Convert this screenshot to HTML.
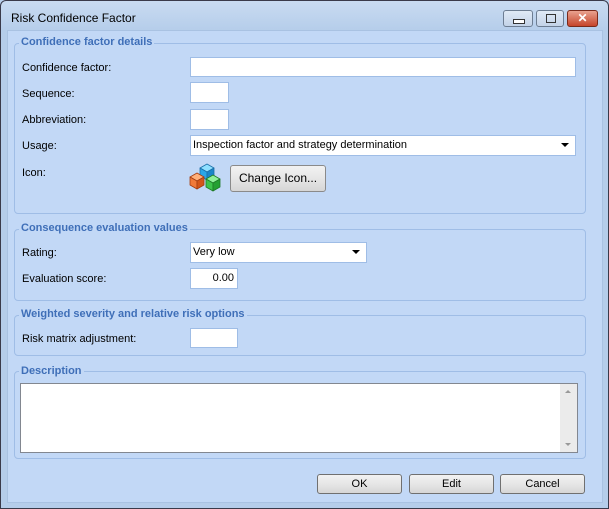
<!DOCTYPE html><html><head><style>
body{margin:0;width:609px;height:509px;overflow:hidden;background:#b9d0ec;font-family:"Liberation Sans",sans-serif;font-size:11px;color:#000;position:relative}
.frame{position:absolute;left:0;top:0;width:607px;height:507px;border:1px solid #3a3a4a;border-radius:6px 6px 0 0;background:linear-gradient(#c9dbf1,#b5cdea 30px,#b5cdea)}
.title{position:absolute;left:11px;top:11px;font-size:12px}
.body{position:absolute;left:7px;top:30px;width:594px;height:471px;background:#c2d8f6;border:1px solid #a9c2e2}
.a{position:absolute}
.g{position:absolute;border:1px solid #9fbde6;border-radius:4px}
.gl{position:absolute;background:#c2d8f6;color:#3f6fb8;font-weight:bold;font-size:11px;padding:0 2px}
.in{position:absolute;background:#fff;border:1px solid #9fbde6;height:19px;box-sizing:border-box}
.btn{position:absolute;border:1px solid #707070;border-radius:3px;background:linear-gradient(#f2f2f2,#e6e6e6 50%,#d6d6d6);text-align:center;box-sizing:border-box;line-height:18px}
.arr{position:absolute;right:6px;top:7px;border-left:4px solid transparent;border-right:4px solid transparent;border-top:4px solid #000}
.wb{position:absolute;top:10px;height:17px;border:1px solid #6d7d92;border-radius:3px;box-sizing:border-box;background:linear-gradient(#e0eaf6,#c3d3e8)}
</style></head><body>
<div class="frame"></div>
<div class="title">Risk Confidence Factor</div>
<div class="wb" style="left:503px;width:30px"><div class="a" style="left:9px;top:8px;width:10px;height:3px;border:1px solid #333;background:#fff"></div></div>
<div class="wb" style="left:536px;width:28px"><div class="a" style="left:9px;top:3px;width:8px;height:7px;border:1px solid #333"></div></div>
<div class="wb" style="left:567px;width:31px;background:linear-gradient(#e9a28f,#c6452b);border-color:#7a2a1a;color:#fff;font-weight:bold;text-align:center;line-height:14px;font-size:12px">✕</div>
<div class="body"></div>

<div class="g" style="left:14px;top:43px;width:570px;height:169px"></div>
<div class="gl" style="left:19px;top:36px">Confidence factor details</div>
<div class="a" style="left:22px;top:62px">Confidence factor:</div>
<div class="in" style="left:190px;top:57px;width:386px;height:20px"></div>
<div class="a" style="left:22px;top:88px">Sequence:</div>
<div class="in" style="left:190px;top:82px;width:39px;height:21px"></div>
<div class="a" style="left:22px;top:114px">Abbreviation:</div>
<div class="in" style="left:190px;top:109px;width:39px;height:21px"></div>
<div class="a" style="left:22px;top:140px">Usage:</div>
<div class="in" style="left:190px;top:135px;width:386px;height:21px"><span class="a" style="left:2px;top:3px">Inspection factor and strategy determination</span><div class="arr"></div></div>
<div class="a" style="left:22px;top:167px">Icon:</div>
<svg class="a" style="left:189px;top:163px" width="34" height="30" viewBox="0 0 34 30">
<g stroke-width=".8" stroke-linejoin="round">
<path d="M11 5l7-4 7 4-7 4z" fill="#8fe0ff" stroke="#1b6fa8"/><path d="M11 5v8l7 4V9z" fill="#2aa6e6" stroke="#1b6fa8"/><path d="M25 5v8l-7 4V9z" fill="#1a86c8" stroke="#1b6fa8"/>
<path d="M1 14l7-4 7 4-7 4z" fill="#ffb07a" stroke="#a43d12"/><path d="M1 14v8l7 4v-8z" fill="#f07a3a" stroke="#a43d12"/><path d="M15 14v8l-7 4v-8z" fill="#d3561a" stroke="#a43d12"/>
<path d="M17 16l7-4 7 4-7 4z" fill="#8ff09a" stroke="#1d7a26"/><path d="M17 16v8l7 4v-8z" fill="#3ec44c" stroke="#1d7a26"/><path d="M31 16v8l-7 4v-8z" fill="#24a032" stroke="#1d7a26"/>
</g></svg>
<div class="btn" style="left:230px;top:165px;width:96px;height:27px;line-height:25px;font-size:12px;border-color:#8a8a8a">Change Icon...</div>

<div class="g" style="left:14px;top:229px;width:570px;height:70px"></div>
<div class="gl" style="left:19px;top:222px">Consequence evaluation values</div>
<div class="a" style="left:22px;top:247px">Rating:</div>
<div class="in" style="left:190px;top:242px;width:177px;height:21px"><span class="a" style="left:2px;top:3px">Very low</span><div class="arr"></div></div>
<div class="a" style="left:22px;top:273px">Evaluation score:</div>
<div class="in" style="left:190px;top:268px;width:48px;height:21px"><span class="a" style="right:3px;top:3px">0.00</span></div>

<div class="g" style="left:14px;top:315px;width:570px;height:39px"></div>
<div class="gl" style="left:19px;top:308px">Weighted severity and relative risk options</div>
<div class="a" style="left:22px;top:333px">Risk matrix adjustment:</div>
<div class="in" style="left:190px;top:328px;width:48px;height:20px"></div>

<div class="g" style="left:14px;top:371px;width:570px;height:86px"></div>
<div class="gl" style="left:19px;top:365px">Description</div>
<div class="in" style="left:20px;top:383px;width:558px;height:70px;border-color:#828790"><div class="a" style="right:0;top:0;width:17px;height:68px;background:#ebebeb"><div class="a" style="left:5px;top:6px;border-left:3px solid transparent;border-right:3px solid transparent;border-bottom:3px solid #999"></div><div class="a" style="left:5px;top:59px;border-left:3px solid transparent;border-right:3px solid transparent;border-top:3px solid #999"></div></div></div>

<div class="btn" style="left:317px;top:474px;width:85px;height:20px">OK</div>
<div class="btn" style="left:409px;top:474px;width:85px;height:20px">Edit</div>
<div class="btn" style="left:500px;top:474px;width:85px;height:20px">Cancel</div>
</body></html>
